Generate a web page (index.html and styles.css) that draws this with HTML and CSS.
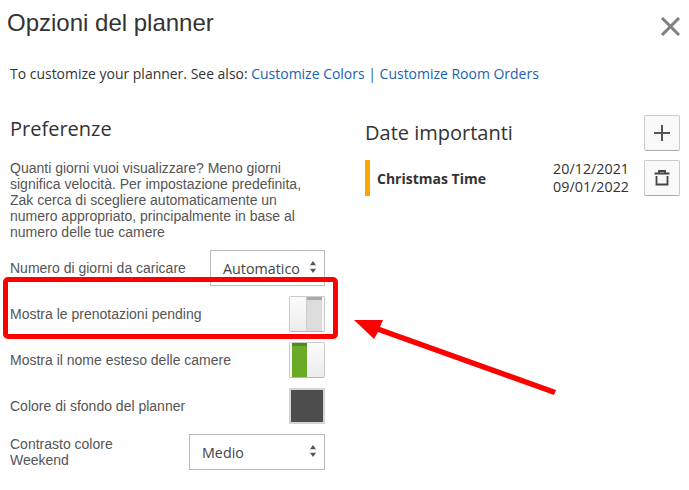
FILE: index.html
```html
<!DOCTYPE html>
<html lang="it">
<head>
<meta charset="utf-8">
<title>Opzioni del planner</title>
<link rel="stylesheet" href="styles.css">
</head>
<body>
<div class="modal">
  <header class="head">
    <h1 class="title">Opzioni del planner</h1>
    <svg class="close" width="21" height="19" viewBox="0 0 21 19"><path d="M2 1l17 17M19 1L2 18" fill="none" stroke="#808080" stroke-width="3"/></svg>
  </header>
  <p class="intro">To customize your planner. See also: <a>Customize Colors</a> <span class="sep">|</span> <a>Customize Room Orders</a></p>
  <div class="cols">
    <section class="left">
      <h2 class="h-pref">Preferenze</h2>
      <p class="desc">Quanti giorni vuoi visualizzare? Meno giorni significa velocità. Per impostazione predefinita, Zak cerca di scegliere automaticamente un numero appropriato, principalmente in base al numero delle tue camere</p>
      <div class="rows">
        <div class="row">
          <span class="label">Numero di giorni da caricare</span>
          <div class="select sel-auto"><span>Automatico</span><svg class="updown" width="6" height="12" viewBox="0 0 7 11" preserveAspectRatio="none"><path d="M3.5 0L7 4H0zM3.5 11L0 7h7z" fill="#555"/></svg></div>
        </div>
        <div class="row">
          <span class="label">Mostra le prenotazioni pending</span>
          <div class="toggle"><span class="knob"></span><span class="track off"></span></div>
        </div>
        <div class="row">
          <span class="label">Mostra il nome esteso delle camere</span>
          <div class="toggle"><span class="track on"></span><span class="knob"></span></div>
        </div>
        <div class="row">
          <span class="label">Colore di sfondo del planner</span>
          <div class="swatch"></div>
        </div>
        <div class="row">
          <span class="label narrow">Contrasto colore Weekend</span>
          <div class="select sel-medio"><span>Medio</span><svg class="updown" width="6" height="12" viewBox="0 0 7 11" preserveAspectRatio="none"><path d="M3.5 0L7 4H0zM3.5 11L0 7h7z" fill="#555"/></svg></div>
        </div>
      </div>
    </section>
    <section class="right">
      <div class="date-head">
        <h2 class="h-date">Date importanti</h2>
        <button class="icon-btn" type="button" aria-label="Aggiungi"><svg width="16" height="16" viewBox="0 0 16 16"><path d="M8 0v16M0 8h16" fill="none" stroke="#555" stroke-width="2"/></svg></button>
      </div>
      <div class="event">
        <span class="event-name">Christmas Time</span>
        <span class="event-dates">20/12/2021<br>09/01/2022</span>
        <button class="icon-btn" type="button" aria-label="Elimina"><svg width="16" height="16" viewBox="0 0 16 16"><path d="M0.5 3.5h15M5 3.5V1h6v2.5M2.5 6v8.5h11V6" fill="none" stroke="#444" stroke-width="1.8"/></svg></button>
      </div>
    </section>
  </div>
</div>
<div class="highlight"></div>
<svg class="arrow" width="210" height="85" viewBox="0 0 210 85"><path d="M3 4H32L29 11L205 74L203 79L27 16L23 23Z" fill="#f00"/></svg>
</body>
</html>
```
FILE: styles.css
```css
html, body { margin: 0; padding: 0; background: #fff; }
body { position: relative; width: 689px; height: 490px; overflow: hidden; font-family: "Open Sans", sans-serif; color: #333; }
.modal { padding: 0 9px 0 10px; }
.head { display: flex; justify-content: space-between; align-items: flex-start; margin-left: -3px; padding-top: 8px; height: 56px; box-sizing: border-box; }
.title { margin: 0; font: 400 24px/30px "Liberation Sans", sans-serif; color: #333; }
.close { margin-top: 9px; margin-right: -1px; }
.intro { margin: 0; font-size: 13.97px; line-height: 20px; padding-top: 8px; color: #333; height: 38px; }
.intro a { color: #1a5fb4; }
.sep { color: #1a5fb4; }
.cols { display: flex; gap: 40px; padding-top: 14px; }
.left { width: 315px; }
.right { width: 315px; }
.h-pref { margin: 0; font: 400 20px/26px "Open Sans", sans-serif; color: #333; }
.desc { margin: 18px 0 0; font: 14px/16px "Liberation Sans", sans-serif; color: #555; width: 300px; height: 80px; }
.rows { display: flex; flex-direction: column; gap: 10px; margin-top: 10px; }
.row { display: flex; justify-content: space-between; align-items: center; height: 36px; }
.label { font: 14px/16px "Liberation Sans", sans-serif; color: #555; }
.label.narrow { width: 130px; }
.select { box-sizing: border-box; height: 36px; border: 1px solid #bbb; display: flex; align-items: center; justify-content: space-between; font-size: 14.3px; color: #444; background: #fff; padding: 0 8px 0 12px; }
.select .updown { margin-top: -3px; }
.sel-auto { width: 115px; }
.sel-medio { width: 136px; }
.updown { flex: none; }
.toggle { box-sizing: border-box; width: 36px; height: 36px; border: 1px solid #ccc; border-radius: 2px; display: flex; padding: 0 2px 0 0; background: #f7f7f7; border-bottom-color: #b5b5b5; }
.toggle:has(.on) { padding: 0 0 0 2px; }
.knob { flex: 1; background: linear-gradient(#fbfbfb, #ececec); }
.track { width: 16px; flex: none; }
.track.off { background: linear-gradient(#aaa 0, #aaa 3px, #dcdcdc 3px); border-left: 1px solid #ccc; width: 15px; }
.track.on { background: linear-gradient(#4f8a1e 0, #4f8a1e 3px, #6aaa27 3px); width: 15px; }
.swatch { box-sizing: border-box; width: 36px; height: 36px; background: #4d4d4d; border: 2px solid #d4d4d4; }
.date-head { display: flex; justify-content: space-between; align-items: center; margin-top: -1px; }
.h-date { margin: 0; font: 400 20px/26px "Open Sans", sans-serif; color: #333; }
.icon-btn { box-sizing: border-box; width: 36px; height: 36px; padding: 0; border: 1px solid #ccc; border-bottom-color: #aaa; border-radius: 2px; background: #f9f9f9; display: flex; align-items: center; justify-content: center; }
.event { display: flex; align-items: center; margin-top: 9px; height: 36px; border-left: 5px solid #ffa500; padding-left: 7px; }
.event-name { flex: 1; font-weight: 700; font-size: 14px; color: #333; }
.event-dates { font-size: 14.3px; line-height: 18px; color: #333; margin-right: 15px; }
.highlight { position: absolute; left: 3px; top: 277px; width: 335px; height: 62px; box-sizing: border-box; border: 5px solid #f00; border-radius: 5px; }
.arrow { position: absolute; left: 351px; top: 316px; }
```
